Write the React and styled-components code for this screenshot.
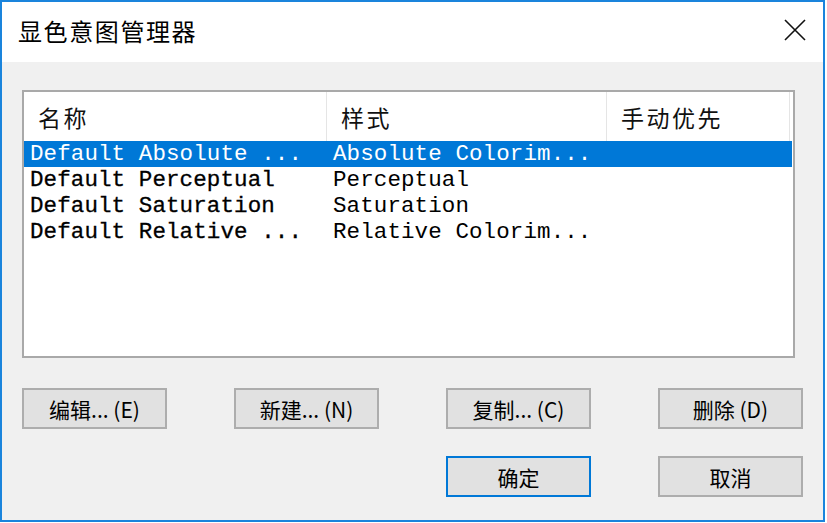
import React from "react";
import styled, { createGlobalStyle } from "styled-components";

const GlobalStyle = createGlobalStyle`
  html, body {
    margin: 0;
    padding: 0;
    background: #ffffff;
  }
  body {
    font-family: "Noto Sans CJK SC", "Noto Sans", sans-serif;
  }
`;

const rows = [
  { name: "Default Absolute ...", style: "Absolute Colorim...", selected: true },
  { name: "Default Perceptual", style: "Perceptual" },
  { name: "Default Saturation", style: "Saturation" },
  { name: "Default Relative ...", style: "Relative Colorim..." },
];

function CloseIcon() {
  return (
    <svg width="22" height="22" viewBox="0 0 22 22">
      <path d="M1 1 L21 21 M21 1 L1 21" stroke="#111" strokeWidth="1.6" fill="none" />
    </svg>
  );
}

function App() {
  return (
    <>
      <GlobalStyle />
      <Window>
        <TitleBar>
          <Title>显色意图管理器</Title>
          <CloseButton>
            <CloseIcon />
          </CloseButton>
        </TitleBar>
        <Body>
          <ListBox>
            <HeaderRow>
              <HeaderCell>名称</HeaderCell>
              <HeaderCell>样式</HeaderCell>
              <HeaderCell>手动优先</HeaderCell>
              <HeaderCell />
            </HeaderRow>
            {rows.map((r) => (
              <Row key={r.name} $selected={r.selected}>
                <Cell $heavy={!r.selected}>{r.name}</Cell>
                <Cell>{r.style}</Cell>
                <Cell />
              </Row>
            ))}
          </ListBox>
          <Buttons>
            <Button>编辑... (E)</Button>
            <Button>新建... (N)</Button>
            <Button>复制... (C)</Button>
            <Button>删除 (D)</Button>
            <Button $default $col={3}>确定</Button>
            <Button $col={4}>取消</Button>
          </Buttons>
        </Body>
      </Window>
    </>
  );
}

export default App;

const Window = styled.div`
  width: 821px;
  height: 518px;
  border: 2px solid #1a84dc;
  background: #f0f0f0;
  display: flex;
  flex-direction: column;
`;

const TitleBar = styled.div`
  height: 60px;
  background: #ffffff;
  display: flex;
  align-items: center;
  justify-content: space-between;
  padding: 0 17px 0 16px;
`;

const Title = styled.div`
  font-size: 24px;
  letter-spacing: 1.6px;
  color: #000;
  margin-top: -4px;
`;

const CloseButton = styled.div`
  display: flex;
  align-items: center;
  margin-top: -4px;
`;

const Body = styled.div`
  padding: 28px 19px 0 20px;
  display: flex;
  flex-direction: column;
`;

const ListBox = styled.div`
  width: 769px;
  height: 264px;
  border: 2px solid #a9a9a9;
  background: #ffffff;
  display: flex;
  flex-direction: column;
`;

const HeaderRow = styled.div`
  display: grid;
  grid-template-columns: 303px 280px 183px 1fr;
  height: 49px;
`;

const HeaderCell = styled.div`
  border-right: 1px solid #e5e5e5;
  padding-left: 14px;
  font-size: 23px;
  letter-spacing: 2.5px;
  color: #111;
  display: flex;
  align-items: center;
  &:last-child {
    border-right: none;
  }
`;

const Row = styled.div`
  display: grid;
  grid-template-columns: 303px 280px 1fr;
  height: 26px;
  align-items: center;
  background: ${(p) => (p.$selected ? "#0078d7" : "transparent")};
  color: ${(p) => (p.$selected ? "#ffffff" : "#000000")};
  font-family: "Liberation Mono", "DejaVu Sans Mono", monospace;
  font-size: 22.5px;
  letter-spacing: 0.1px;
  margin-right: 1px;
`;

const Cell = styled.div`
  padding-left: 6px;
  white-space: pre;
  overflow: hidden;
  -webkit-text-stroke: ${(p) => (p.$heavy ? "0.3px currentColor" : "0")};
`;

const Buttons = styled.div`
  margin-top: 30px;
  display: grid;
  grid-template-columns: repeat(4, 145px);
  justify-content: space-between;
  row-gap: 27px;
  width: 781px;
`;

const Button = styled.div`
  grid-column: ${(p) => p.$col || "auto"};
  height: 41px;
  box-sizing: border-box;
  background: #e1e1e1;
  border: 2px solid ${(p) => (p.$default ? "#0078d7" : "#adadad")};
  display: flex;
  align-items: center;
  justify-content: center;
  font-size: 21px;
  color: #000;
`;
